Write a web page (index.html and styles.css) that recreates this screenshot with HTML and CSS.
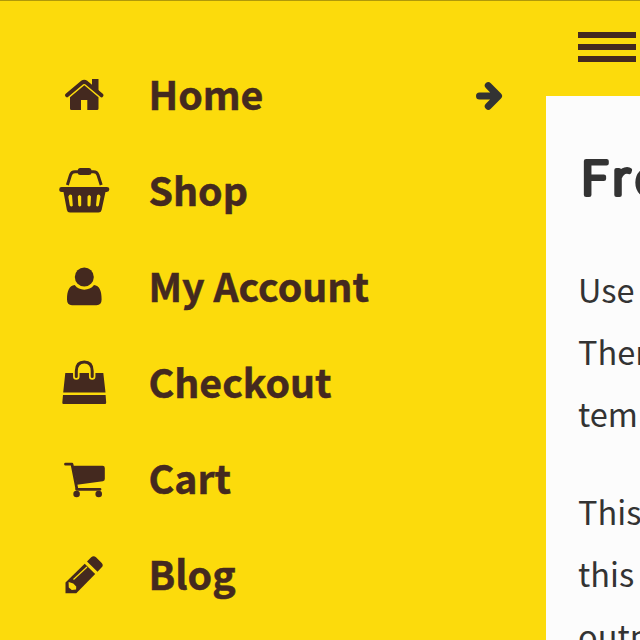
FILE: index.html
```html
<!DOCTYPE html>
<html lang="en">
<head>
<meta charset="utf-8">
<title>Menu</title>
<link rel="stylesheet" href="styles.css">
</head>
<body>
<div class="app">
  <nav class="drawer">
    <a class="item"><svg class="icon" viewBox="50 65 70 60"><path d="M67 95.3 82.2 82.5Q84.2 81.2 86.2 82.5L101.500 95.300" fill="none" stroke="currentColor" stroke-width="4" stroke-linecap="round" stroke-linejoin="round"/><path d="M92 79h6.500v14l-6.500-5.500zM70 97.300 84.300 85.300 98.500 97.300V108.500Q98.500 110 97 110H87.300V100H81V110H71.500Q70 110 70 108.500z"/></svg><span class="label">Home</span><svg class="arrow" viewBox="470 76 40 40"><path d="M479.500 96h18M488.300 85.600 498.500 96 488.300 106.300" fill="none" stroke="currentColor" stroke-width="7" stroke-linecap="round" stroke-linejoin="round"/></svg></a>
    <a class="item"><svg class="icon" viewBox="50 161 70 60"><path d="M67.400 185 70.500 175Q71.500 171.700 75 171.700H93.500Q97 171.700 98 175L101.200 185" fill="none" stroke="currentColor" stroke-width="3"/><rect x="77.800" y="168" width="13.600" height="7" rx="2.500"/><path fill-rule="evenodd" d="M61.800 187H106.700Q109.300 187 109.300 189.400T106.700 191.900H105.500L101.600 210Q101 212.500 98.500 212.500H70Q67.400 212.500 66.900 210L63.500 191.900H61.800Q59.200 191.900 59.200 189.400T61.800 187zM68.300 196.800 69.800 205.500Q71.200 207.300 72.800 205.800L72 195.200Q69.500 193.300 68.300 196.800zM77.800 196.500 78.300 205.500Q79.700 207.500 81.200 205.500V196.500Q79.500 193.500 77.800 196.500zM87.500 196.500V205.500Q89 207.500 90.500 205.500L91 196.500Q89.200 193.500 87.500 196.500zM97 195.200 96 205.500Q97.300 207.500 98.800 205.500L100.500 196.500Q99.500 193.300 97 195.200z"/></svg><span class="label">Shop</span></a>
    <a class="item"><svg class="icon" viewBox="50 257 70 60"><circle cx="84.300" cy="277" r="9.500"/><path d="M74.700 285.100C77.200 288.500 80.500 289.700 84.300 289.700S91.500 288.500 94 285.100C99.500 285.500 101.600 291 101.600 299.500Q101.600 305.200 96.500 305.200H72Q67 305.200 67 299.500C67 291 69.300 285.500 74.700 285.100z"/></svg><span class="label">My Account</span></a>
    <a class="item"><svg class="icon" viewBox="50 353 70 60"><path d="M65.300 373H103.300L105.500 392.500H63.200zM63 395H105.600L106.200 402.500Q106.200 404 105 404H63.500Q62.200 404 62.300 402.500z"/><path class="halo" d="M76.300 376.500V371Q76.500 362 84.300 362T92.200 371V376.500"/><path d="M76.300 376.500V371Q76.500 362 84.300 362T92.200 371V376.500" fill="none" stroke="currentColor" stroke-width="3" stroke-linecap="round"/></svg><span class="label">Checkout</span></a>
    <a class="item"><svg class="icon" viewBox="50 449 70 60"><path d="M65.500 464.200H72L76.600 487.500V489.300H100" fill="none" stroke="currentColor" stroke-width="2.800" stroke-linecap="round" stroke-linejoin="round"/><path d="M73 465.700H102.500Q104.800 465.700 104.800 468V479Q104.800 480.800 102.800 481.200L77 484.700z"/><circle cx="76.600" cy="494" r="3.300"/><circle cx="98.700" cy="494" r="3.300"/></svg><span class="label">Cart</span></a>
    <a class="item"><svg class="icon" viewBox="50 545 70 60"><path d="M65.500 593.200V582.500L84.700 563.800 95.200 574 76.300 593.200z"/><path d="M87 561.500 91.200 557.300Q93.600 555 96 557.300L101.500 562.700Q104 565.200 101.500 567.600L97.500 571.700z"/><path class="cut" d="M68.800 587.500 68.600 582 73.300 583.500 76.200 586.500 76.100 589.500 71.800 590z"/><path class="shine" d="M73.500 579.500 87 567"/></svg><span class="label">Blog</span></a>
  </nav>
  <div class="page">
    <header class="topbar"><div class="burger"><i></i><i></i><i></i></div></header>
    <main class="content">
      <h1 class="title"><svg class="title-art" viewBox="0 0 120 60"><text transform="scale(1.08 1)" y="45.300"><tspan x="2.600">F</tspan><tspan x="31">r</tspan><tspan x="52.600">o</tspan></text></svg></h1>
      <p>Use<br>Then<br>tem</p>
      <p>This<br>this<br>outp</p>
    </main>
  </div>
</div>
</body>
</html>
```
FILE: styles.css
```css
* { box-sizing: border-box; }
body {
  margin: 0;
  overflow: hidden;
  font-family: "Noto Sans CJK JP", "Noto Sans", sans-serif;
}
.app {
  display: flex;
  width: 640px;
  height: 640px;
  overflow: hidden;
  background: #fcdb0c;
  border-top: 1px solid #b0990a;
}
.drawer {
  flex: 0 0 546px;
  padding-top: 47px;
  color: #44291f;
}
.item {
  display: flex;
  align-items: center;
  height: 96px;
  padding: 0 36px 0 50px;
}
.icon {
  flex: none;
  width: 70px;
  height: 60px;
  margin-top: -2px;
  fill: currentColor;
}
.label {
  flex: 1;
  margin: -6px 0 0 28.400px;
  font-size: 39.300px;
  line-height: 96px;
  font-weight: 700;
  -webkit-text-stroke: 0.500px #44291f;
  white-space: nowrap;
}
.arrow {
  width: 40px;
  height: 40px;
  color: #333;
}
.halo { fill: none; stroke: #fcdb0c; stroke-width: 6.500; stroke-linecap: round; }
.cut { fill: #fcdb0c; }
.shine { fill: none; stroke: #fcdb0c; stroke-width: 1.200; }
.page { flex: 0 0 94px; overflow: hidden; }
.topbar { height: 95px; padding: 31px 0 0 32px; }
.burger {
  display: flex;
  flex-direction: column;
  gap: 6px;
  width: 58px;
}
.burger i { height: 6px; background: #44291f; }
.content {
  height: 544px;
  padding: 54px 0 0 32px;
  overflow: hidden;
  background: #fcfcfc;
  color: #333;
}
.title { height: 60px; margin: 0 0 48px; }
.title-art {
  display: block;
  width: 120px;
  height: 60px;
  fill: #333;
  stroke: #333;
  stroke-width: 4.200;
  stroke-linejoin: round;
  font-size: 47px;
  font-weight: 300;
}
.content p {
  margin: 0 0 36px;
  font-size: 32.500px;
  line-height: 62px;
  white-space: nowrap;
}
```
